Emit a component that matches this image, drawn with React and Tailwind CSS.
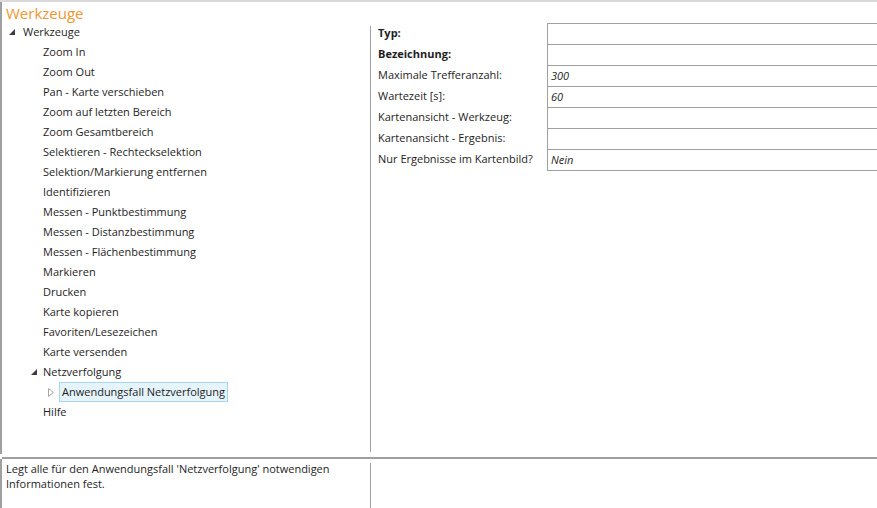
import { useState } from 'react';

const tools = [
  'Zoom In',
  'Zoom Out',
  'Pan - Karte verschieben',
  'Zoom auf letzten Bereich',
  'Zoom Gesamtbereich',
  'Selektieren - Rechteckselektion',
  'Selektion/Markierung entfernen',
  'Identifizieren',
  'Messen - Punktbestimmung',
  'Messen - Distanzbestimmung',
  'Messen - Flächenbestimmung',
  'Markieren',
  'Drucken',
  'Karte kopieren',
  'Favoriten/Lesezeichen',
  'Karte versenden',
];

const props = [
  { label: 'Typ:', bold: true, value: '' },
  { label: 'Bezeichnung:', bold: true, value: '' },
  { label: 'Maximale Trefferanzahl:', value: '300' },
  { label: 'Wartezeit [s]:', value: '60' },
  { label: 'Kartenansicht - Werkzeug:', value: '' },
  { label: 'Kartenansicht - Ergebnis:', value: '' },
  { label: 'Nur Ergebnisse im Kartenbild?', value: 'Nein' },
];

function Expanded() {
  return (
    <svg width="6" height="6" viewBox="0 0 6 6" className="shrink-0">
      <polygon points="6,0 6,6 0,6" fill="#3c3c3c" />
    </svg>
  );
}

function Collapsed() {
  return (
    <svg width="6" height="9" viewBox="0 0 6 9" className="shrink-0">
      <polygon points="0.5,0.5 5.5,4.5 0.5,8.5" fill="none" stroke="#a6a6a6" strokeWidth="1" />
    </svg>
  );
}

export default function App() {
  const [selected, setSelected] = useState('Anwendungsfall Netzverfolgung');

  return (
    <div
      className="w-[877px] h-[508px] bg-white border-t-2 border-[#d9d9d9] overflow-hidden text-[11px] text-[#1e1e1e] flex flex-col"
      style={{ fontFamily: '"Open Sans", "Noto Sans", sans-serif' }}
    >
      <div className="flex-1 flex border-l-2 border-[#a0a0a0] min-h-0">
        {/* Left: tree */}
        <div className="w-[368px] shrink-0 flex flex-col">
          <div className="h-[20px] pl-[4px] pt-[1px] text-[15px] leading-[20px] text-[#f0962e]">Werkzeuge</div>
          <div className="h-[20px] flex items-center pl-[7px]">
            <Expanded />
            <span className="ml-[8px]">Werkzeuge</span>
          </div>
          {tools.map((t) => (
            <div key={t} className="h-[20px] flex items-center pl-[41px]">
              {t}
            </div>
          ))}
          <div className="h-[20px] flex items-center pl-[29px]">
            <Expanded />
            <span className="ml-[6px]">Netzverfolgung</span>
          </div>
          <div className="h-[20px] flex items-center pl-[46px]">
            <Collapsed />
            <button
              type="button"
              onClick={() => setSelected('Anwendungsfall Netzverfolgung')}
              className={
                'ml-[5px] h-[20px] px-[2px] border ' +
                (selected === 'Anwendungsfall Netzverfolgung'
                  ? 'bg-[#e5f3fb] border-[#a5d7f2]'
                  : 'border-transparent')
              }
            >
              Anwendungsfall Netzverfolgung
            </button>
          </div>
          <div className="h-[20px] flex items-center pl-[41px]">Hilfe</div>
        </div>

        <div className="w-px bg-[#a0a0a0] mt-[24px] mb-[2px] shrink-0" />

        {/* Right: properties */}
        <div className="flex-1 pt-[21px] pl-[7px]">
          <div className="flex">
            <div className="w-[169px] shrink-0">
              {props.map((p) => (
                <div key={p.label} className={'h-[21px] flex items-center ' + (p.bold ? 'font-bold' : '')}>
                  {p.label}
                </div>
              ))}
            </div>
            <div className="flex-1 border-l border-t border-[#a0a0a0]">
              {props.map((p) => (
                <div key={p.label} className="h-[21px] border-b border-[#a0a0a0] flex items-center pl-[3px] italic">
                  {p.value}
                </div>
              ))}
            </div>
          </div>
        </div>
      </div>

      <div className="h-[2px] bg-[#a0a0a0] mt-[3px] ml-[2px]" />

      <div className="h-[49px] flex border-l-2 border-[#a0a0a0]">
        <div className="w-[368px] shrink-0 pl-[4px] pt-[2px] leading-[15px]">
          Legt alle für den Anwendungsfall 'Netzverfolgung' notwendigen
          <br />
          Informationen fest.
        </div>
        <div className="w-px bg-[#a0a0a0] mt-[4px] shrink-0" />
        <div className="flex-1" />
      </div>
    </div>
  );
}
